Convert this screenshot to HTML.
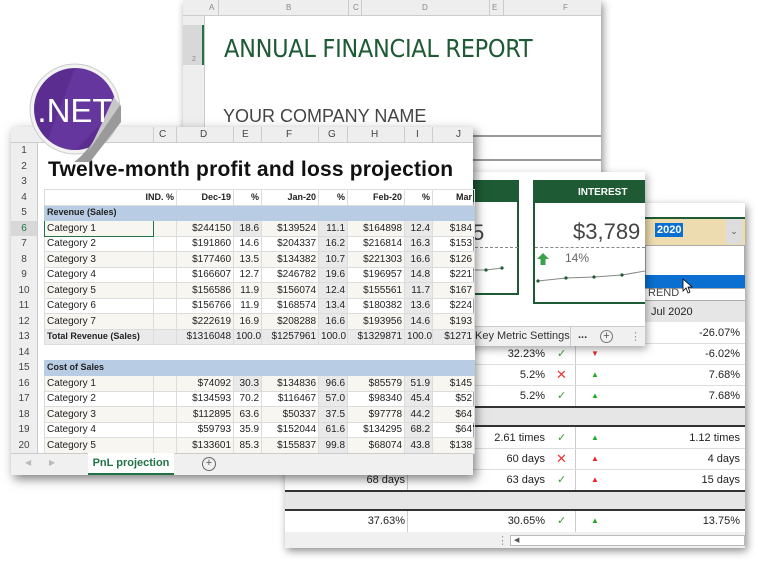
<!DOCTYPE html>
<html><head><meta charset="utf-8"><style>
*{box-sizing:border-box;margin:0;padding:0}
body{width:758px;height:562px;background:#fff;position:relative;overflow:hidden;font-family:"Liberation Sans",Arial,sans-serif;color:#222}
.abs{position:absolute}
.win{position:absolute;background:#fff;box-shadow:2px 3px 8px rgba(0,0,0,.45)}
.r{text-align:right}
table{border-collapse:collapse;table-layout:fixed}
td{height:15.5px;font-size:10px;padding:0 2px;border:1px solid #dcdcdc;white-space:nowrap;overflow:hidden;line-height:13px}
.km div{position:absolute;font-size:11px}
</style></head><body>

<!-- Annual report window -->
<div class="win" style="left:183px;top:0;width:418px;height:180px;">
  <div class="abs" style="left:0;top:0;width:418px;height:16px;background:#eee;border-bottom:1px solid #ccc;font-size:8px;color:#888">
    <span class="abs" style="left:26px;top:3px">A</span><span class="abs" style="left:35px;top:0;width:1px;height:16px;background:#ccc"></span>
    <span class="abs" style="left:103px;top:3px">B</span><span class="abs" style="left:165px;top:0;width:1px;height:16px;background:#ccc"></span>
    <span class="abs" style="left:170px;top:3px">C</span><span class="abs" style="left:178px;top:0;width:1px;height:16px;background:#ccc"></span>
    <span class="abs" style="left:239px;top:3px">D</span><span class="abs" style="left:306px;top:0;width:1px;height:16px;background:#ccc"></span>
    <span class="abs" style="left:309px;top:3px">E</span><span class="abs" style="left:320px;top:0;width:1px;height:16px;background:#ccc"></span>
    <span class="abs" style="left:380px;top:3px">F</span>
  </div>
  <div class="abs" style="left:0;top:16px;width:22px;height:164px;background:#eee;border-right:1px solid #ccc;font-size:7px;color:#888">
    <div class="abs" style="left:0;top:9px;width:21px;height:40px;background:#d8d8d8;border-right:2px solid #217346"></div>
    <span class="abs" style="left:9px;top:40px">2</span><span class="abs" style="left:9px;top:116px">3</span>
  </div>
  <div class="abs" style="left:41px;top:34px;font-size:25px;color:#1e5b34;font-family:'DejaVu Sans Condensed','DejaVu Sans',sans-serif;letter-spacing:-0.3px">ANNUAL FINANCIAL REPORT</div>
  <div class="abs" style="left:40px;top:106px;font-size:18px;color:#444">YOUR COMPANY NAME</div>
  <div class="abs" style="left:22px;top:135px;width:396px;height:2px;background:#999"></div>
  <div class="abs" style="left:22px;top:159px;width:396px;height:2px;background:#999"></div>
</div>

<!-- Key metrics window -->
<div class="win km" style="left:285px;top:203px;width:460px;height:345px;z-index:0">
  <div style="left:360px;top:14px;width:100px;height:28px;background:#ecdcb0;border-top:2px solid #1e5b34"></div>
  <div style="left:370px;top:20px;background:#0a6fd0;color:#fff;font-weight:bold;font-size:11px;padding:1px 2px">2020</div>
  <div style="left:441px;top:16px;width:16px;height:25px;background:#ddd;color:#555;font-size:9px;text-align:center;line-height:25px">⌄</div>
  <div style="left:360px;top:42px;width:100px;height:44px;background:#fff;border:1px solid #aaa"></div>
  <div style="left:360px;top:72px;width:100px;height:13px;background:#0a6fd0"></div>
  <svg style="left:397px;top:75px;position:absolute" width="12" height="16"><path d="M1 1 L1 13 L4 10 L6 15 L8 14 L6 9 L10 9 Z" fill="#fff" stroke="#000" stroke-width="0.8"/></svg>
  <div style="left:363px;top:84px;font-size:11px;color:#444">REND</div>
  <div style="left:0;top:97px;width:460px;height:22px;background:#e6e6e6;border-top:1px solid #aaa"></div>
  <div style="left:366px;top:103px">Jul 2020</div>
  <div style="left:122px;top:119px;width:1px;height:210px;background:#ccc"></div>
  <div style="left:290px;top:119px;width:1px;height:210px;background:#ccc"></div>
  <div style="left:0;top:140px;width:460px;height:1px;background:#ddd"></div>
  <div style="left:0;top:161px;width:460px;height:1px;background:#ddd"></div>
  <div style="left:0;top:182px;width:460px;height:1px;background:#ddd"></div>
  <div style="left:0;top:203px;width:460px;height:21px;background:#e6e6e6;border-top:2px solid #333;border-bottom:2px solid #333"></div>
  <div style="left:0;top:245px;width:460px;height:1px;background:#ddd"></div>
  <div style="left:0;top:266px;width:460px;height:1px;background:#ddd"></div>
  <div style="left:0;top:287px;width:460px;height:21px;background:#e6e6e6;border-top:2px solid #333;border-bottom:2px solid #333"></div>
  <div style="left:0;top:329px;width:460px;height:16px;background:#f0f0f0"></div>
  <div style="left:212px;top:331px;color:#999">⋮</div>
  <div style="left:225px;top:332px;width:235px;height:11px;background:#fff;border:1px solid #bbb;font-size:7px;color:#555;padding-left:3px">◀</div>
  <div class="r" style="right:5px;top:124px">-26.07%</div>
  <div class="r" style="left:200px;top:145px;width:60px">32.23%</div><div style="left:272px;top:144px;color:#3a9a3a">✓</div><div style="left:306px;top:146px;color:#d33;font-size:8px">▼</div><div class="r" style="right:5px;top:145px">-6.02%</div>
  <div class="r" style="left:200px;top:166px;width:60px">5.2%</div><div style="left:271px;top:164px;color:#e33;font-size:13px">✕</div><div style="left:306px;top:167px;color:#2a2;font-size:8px">▲</div><div class="r" style="right:5px;top:166px">7.68%</div>
  <div class="r" style="left:200px;top:187px;width:60px">5.2%</div><div style="left:272px;top:186px;color:#3a9a3a">✓</div><div style="left:306px;top:188px;color:#2a2;font-size:8px">▲</div><div class="r" style="right:5px;top:187px">7.68%</div>
  <div class="r" style="left:180px;top:229px;width:80px">2.61 times</div><div style="left:272px;top:228px;color:#3a9a3a">✓</div><div style="left:306px;top:230px;color:#2a2;font-size:8px">▲</div><div class="r" style="right:5px;top:229px">1.12 times</div>
  <div class="r" style="left:180px;top:250px;width:80px">60 days</div><div style="left:271px;top:248px;color:#e33;font-size:13px">✕</div><div style="left:306px;top:251px;color:#e22;font-size:8px">▲</div><div class="r" style="right:5px;top:250px">4 days</div>
  <div class="r" style="left:40px;top:271px;width:80px">68 days</div>
  <div class="r" style="left:180px;top:271px;width:80px">63 days</div><div style="left:272px;top:270px;color:#3a9a3a">✓</div><div style="left:306px;top:272px;color:#e22;font-size:8px">▲</div><div class="r" style="right:5px;top:271px">15 days</div>
  <div class="r" style="left:40px;top:312px;width:80px">37.63%</div>
  <div class="r" style="left:180px;top:312px;width:80px">30.65%</div><div style="left:272px;top:311px;color:#3a9a3a">✓</div><div style="left:306px;top:313px;color:#2a2;font-size:8px">▲</div><div class="r" style="right:5px;top:312px">13.75%</div>
</div>

<!-- Dashboard window -->
<div class="win" style="left:400px;top:172px;width:245px;height:174px;background:#fff;box-shadow:2px 3px 8px rgba(0,0,0,.35);z-index:1">
  <div class="abs" style="left:0;top:8px;width:119px;height:115px;border:2px solid #1e5b34;border-left:none"></div>
  <div class="abs" style="left:0;top:8px;width:119px;height:22px;background:#1e5b34"></div>
  <div class="abs" style="left:72px;top:48px;font-size:22px;color:#444">5</div>
  <div class="abs" style="left:0;top:75px;width:118px;border-top:1px dashed #888"></div>
  <svg class="abs" style="left:70px;top:90px" width="48" height="12"><polyline points="0,8 16,8 32,6" fill="none" stroke="#888"/><circle cx="16" cy="8" r="1.6" fill="#1e5b34"/><circle cx="32" cy="6" r="1.6" fill="#1e5b34"/></svg>
  <div class="abs" style="left:133px;top:8px;width:112px;height:124px;border:2px solid #1e5b34;border-right:none"></div>
  <div class="abs" style="left:133px;top:8px;width:112px;height:23px;background:#1e5b34;color:#fff;font-size:10px;font-weight:bold;padding:7px 0 0 45px">INTEREST</div>
  <div class="abs" style="left:173px;top:47px;font-size:22px;color:#444">$3,789</div>
  <div class="abs" style="left:135px;top:75px;width:110px;border-top:1px dashed #888"></div>
  <svg class="abs" style="left:136px;top:80px" width="14" height="14"><path d="M7 1 L13 7 L9.5 7 L9.5 13 L4.5 13 L4.5 7 L1 7 Z" fill="#3aa24a"/></svg>
  <div class="abs" style="left:165px;top:79px;font-size:12px;color:#666">14%</div>
  <svg class="abs" style="left:135px;top:93px" width="110" height="20"><polyline points="3,16 31,13 59,12 87,10 110,6" fill="none" stroke="#888"/><circle cx="3" cy="16" r="1.6" fill="#1e5b34"/><circle cx="31" cy="13" r="1.6" fill="#1e5b34"/><circle cx="59" cy="12" r="1.6" fill="#1e5b34"/><circle cx="87" cy="10" r="1.6" fill="#1e5b34"/></svg>
  <div class="abs" style="left:0;top:154px;width:245px;height:20px;background:#f0f0f0;border-top:1px solid #ccc;font-size:11px;color:#333">
    <span class="abs" style="left:75px;top:3px">Key Metric Settings</span>
    <span class="abs" style="left:170px;top:0;width:1px;height:19px;background:#ccc"></span>
    <span class="abs" style="left:178px;top:2px;font-weight:bold">...</span>
    <span class="abs" style="left:200px;top:3px;width:13px;height:13px;border:1px solid #777;border-radius:50%;font-size:11px;line-height:10px;text-align:center;color:#555">+</span>
    <span class="abs" style="left:230px;top:3px;color:#999">⋮</span>
  </div>
</div>

<!-- Front PnL window -->
<div class="win" style="left:11px;top:127px;width:462px;height:348px;z-index:2;box-shadow:3px 4px 10px rgba(0,0,0,.5)">
  <div class="abs" style="left:0;top:0;width:462px;height:16px;background:#eee;border-bottom:1px solid #ccc;font-size:10px;color:#444">
    <span class="abs" style="left:148px;top:2px">C</span>
    <span class="abs" style="left:189px;top:2px">D</span><span class="abs" style="left:231px;top:2px">E</span>
    <span class="abs" style="left:275px;top:2px">F</span><span class="abs" style="left:317px;top:2px">G</span>
    <span class="abs" style="left:360px;top:2px">H</span><span class="abs" style="left:405px;top:2px">I</span>
    <span class="abs" style="left:445px;top:2px">J</span>
    <span class="abs" style="left:142px;top:0;width:1px;height:16px;background:#ccc"></span>
    <span class="abs" style="left:165px;top:0;width:1px;height:16px;background:#ccc"></span>
    <span class="abs" style="left:222px;top:0;width:1px;height:16px;background:#ccc"></span>
    <span class="abs" style="left:250px;top:0;width:1px;height:16px;background:#ccc"></span>
    <span class="abs" style="left:307px;top:0;width:1px;height:16px;background:#ccc"></span>
    <span class="abs" style="left:336px;top:0;width:1px;height:16px;background:#ccc"></span>
    <span class="abs" style="left:393px;top:0;width:1px;height:16px;background:#ccc"></span>
    <span class="abs" style="left:421px;top:0;width:1px;height:16px;background:#ccc"></span>
  </div>
  <div class="abs" style="left:0;top:16px;width:27px;height:310px;background:#eee;border-right:1px solid #ccc;font-size:10px;color:#444;text-align:center;line-height:15.5px">
    <div>1</div><div>2</div><div>3</div><div>4</div><div>5</div><div style="background:#d8d8d8;color:#217346">6</div><div>7</div><div>8</div><div>9</div><div>10</div><div>11</div><div>12</div><div>13</div><div>14</div><div>15</div><div>16</div><div>17</div><div>18</div><div>19</div><div>20</div>
  </div>
  <div class="abs" style="left:37px;top:31px;font-size:21px;font-weight:bold;color:#111;letter-spacing:0.2px">Twelve-month profit and loss projection</div>
  <table class="abs" style="left:33px;top:62px;width:430px">
    <colgroup><col style="width:109px"><col style="width:23px"><col style="width:57px"><col style="width:28px"><col style="width:57px"><col style="width:29px"><col style="width:57px"><col style="width:28px"><col style="width:42px"></colgroup>
    <tr><td colspan="2" class="r" style="font-weight:bold;font-size:9px">IND. %</td><td class="r" style="font-weight:bold;font-size:9px">Dec-19</td><td class="r" style="font-weight:bold;font-size:9px">%</td><td class="r" style="font-weight:bold;font-size:9px">Jan-20</td><td class="r" style="font-weight:bold;font-size:9px">%</td><td class="r" style="font-weight:bold;font-size:9px">Feb-20</td><td class="r" style="font-weight:bold;font-size:9px">%</td><td class="r" style="font-weight:bold;font-size:9px">Mar</td></tr>
    <tr style="background:#b8cce4"><td colspan="9" style="font-weight:bold;border-color:#b8cce4;font-size:9px">Revenue (Sales)</td></tr>
    <tr style="background:#f7f6f1"><td style="border:1.5px solid #217346">Category 1</td><td></td><td class="r">$244150</td><td class="r" style="background:#e9e9e9">18.6</td><td class="r">$139524</td><td class="r" style="background:#e9e9e9">11.1</td><td class="r">$164898</td><td class="r" style="background:#e9e9e9">12.4</td><td class="r">$184</td></tr>
    <tr><td>Category 2</td><td></td><td class="r">$191860</td><td class="r">14.6</td><td class="r">$204337</td><td class="r" style="background:#e9e9e9">16.2</td><td class="r">$216814</td><td class="r" style="background:#e9e9e9">16.3</td><td class="r">$153</td></tr>
    <tr style="background:#f7f6f1"><td>Category 3</td><td></td><td class="r">$177460</td><td class="r">13.5</td><td class="r">$134382</td><td class="r" style="background:#e9e9e9">10.7</td><td class="r">$221303</td><td class="r" style="background:#e9e9e9">16.6</td><td class="r">$126</td></tr>
    <tr><td>Category 4</td><td></td><td class="r">$166607</td><td class="r">12.7</td><td class="r">$246782</td><td class="r" style="background:#e9e9e9">19.6</td><td class="r">$196957</td><td class="r" style="background:#e9e9e9">14.8</td><td class="r">$221</td></tr>
    <tr style="background:#f7f6f1"><td>Category 5</td><td></td><td class="r">$156586</td><td class="r">11.9</td><td class="r">$156074</td><td class="r" style="background:#e9e9e9">12.4</td><td class="r">$155561</td><td class="r" style="background:#e9e9e9">11.7</td><td class="r">$167</td></tr>
    <tr><td>Category 6</td><td></td><td class="r">$156766</td><td class="r">11.9</td><td class="r">$168574</td><td class="r" style="background:#e9e9e9">13.4</td><td class="r">$180382</td><td class="r" style="background:#e9e9e9">13.6</td><td class="r">$224</td></tr>
    <tr style="background:#f7f6f1"><td>Category 7</td><td></td><td class="r">$222619</td><td class="r">16.9</td><td class="r">$208288</td><td class="r" style="background:#e9e9e9">16.6</td><td class="r">$193956</td><td class="r" style="background:#e9e9e9">14.6</td><td class="r">$193</td></tr>
    <tr style="background:#eaeaea"><td style="font-weight:bold;font-size:9px">Total Revenue (Sales)</td><td></td><td class="r">$1316048</td><td class="r">100.0</td><td class="r">$1257961</td><td class="r">100.0</td><td class="r">$1329871</td><td class="r">100.0</td><td class="r">$1271</td></tr>
    <tr><td colspan="9" style="border:none;background:#fff"></td></tr>
    <tr style="background:#b8cce4"><td colspan="9" style="font-weight:bold;border-color:#b8cce4;font-size:9px">Cost of Sales</td></tr>
    <tr style="background:#f7f6f1"><td>Category 1</td><td></td><td class="r">$74092</td><td class="r" style="background:#e9e9e9">30.3</td><td class="r">$134836</td><td class="r" style="background:#e9e9e9">96.6</td><td class="r">$85579</td><td class="r" style="background:#e9e9e9">51.9</td><td class="r">$145</td></tr>
    <tr><td>Category 2</td><td></td><td class="r">$134593</td><td class="r">70.2</td><td class="r">$116467</td><td class="r" style="background:#e9e9e9">57.0</td><td class="r">$98340</td><td class="r" style="background:#e9e9e9">45.4</td><td class="r">$52</td></tr>
    <tr style="background:#f7f6f1"><td>Category 3</td><td></td><td class="r">$112895</td><td class="r">63.6</td><td class="r">$50337</td><td class="r" style="background:#e9e9e9">37.5</td><td class="r">$97778</td><td class="r" style="background:#e9e9e9">44.2</td><td class="r">$64</td></tr>
    <tr><td>Category 4</td><td></td><td class="r">$59793</td><td class="r">35.9</td><td class="r">$152044</td><td class="r" style="background:#e9e9e9">61.6</td><td class="r">$134295</td><td class="r" style="background:#e9e9e9">68.2</td><td class="r">$64</td></tr>
    <tr style="background:#f7f6f1"><td>Category 5</td><td></td><td class="r">$133601</td><td class="r">85.3</td><td class="r">$155837</td><td class="r" style="background:#e9e9e9">99.8</td><td class="r">$68074</td><td class="r" style="background:#e9e9e9">43.8</td><td class="r">$138</td></tr>
  </table>
  <div class="abs" style="left:0;top:326px;width:462px;height:22px;background:#f0f0f0;border-top:1px solid #ccc;font-size:11px">
    <span class="abs" style="left:14px;top:4px;color:#bbb;font-size:8px">◀</span><span class="abs" style="left:38px;top:4px;color:#bbb;font-size:8px">▶</span>
    <span class="abs" style="left:77px;top:-1px;width:86px;height:22px;background:#fff;border-bottom:2px solid #217346;color:#217346;font-weight:bold;text-align:center;line-height:20px;font-size:11px">PnL projection</span>
    <span class="abs" style="left:191px;top:3px;width:14px;height:14px;border:1px solid #666;border-radius:50%;text-align:center;line-height:11px;color:#555">+</span>
  </div>
</div>

<!-- .NET logo -->
<svg class="abs" style="left:28px;top:62px;z-index:3" width="110" height="110" viewBox="0 0 110 110">
  <circle cx="47" cy="47" r="45" fill="#f2f2f2" stroke="#ccc" stroke-width="1"/>
  <circle cx="47" cy="47" r="41" fill="#5c2d91"/>
  <path d="M47 6 A41 41 0 0 1 88 47 L47 88 A41 41 0 0 1 20 77 Z" fill="#6b3ca5" opacity="0.6"/>
  <path d="M88 38 L93 44 L93 60 L62 100 L46 100 Q66 86 88 38 Z" fill="#9a9a9a"/>
  <path d="M86 35 L92 43 L60 90 Q70 70 86 35Z" fill="#c8c8c8"/>
  <text x="47" y="60" text-anchor="middle" font-family="Liberation Sans,sans-serif" font-size="33" fill="#fff">.NET</text>
</svg>
</body></html>
